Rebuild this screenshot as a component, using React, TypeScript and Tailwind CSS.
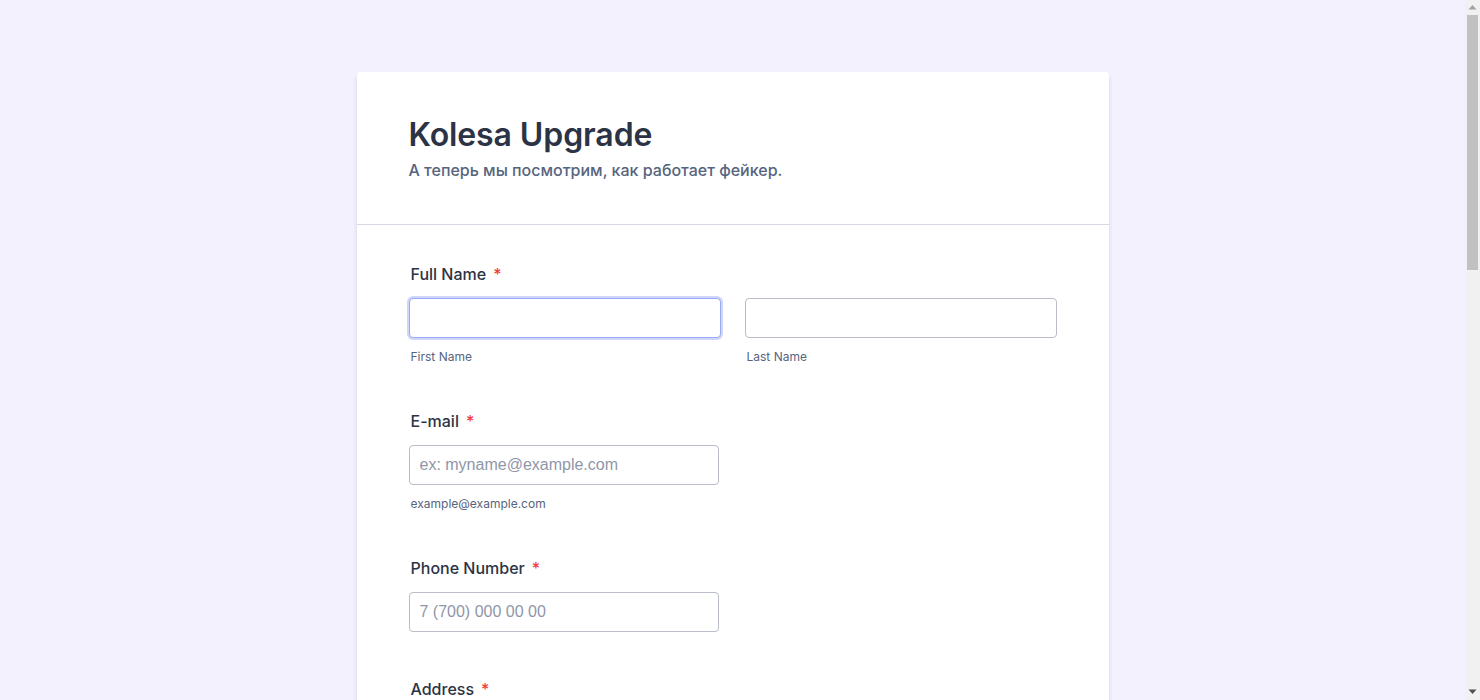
import React from "react";

const inter = { fontFamily: "Inter, 'Noto Sans', sans-serif" };

function Label({ text }: { text: string }) {
  return (
    <div className="pl-[2px] h-6 flex items-center text-[16px] font-medium text-[#2c3345] leading-6" style={inter}>
      <span>{text}</span>
      <span className="ml-[7px] text-[#f23a3c]">*</span>
    </div>
  );
}

function Input({ placeholder, focused, w = "w-[310px]" }: { placeholder?: string; focused?: boolean; w?: string }) {
  return (
    <input
      readOnly
      placeholder={placeholder}
      className={`${w} h-10 rounded-[4px] bg-white px-[10px] text-[16px] outline-none placeholder:text-[#8f96a8] ${
        focused ? "border border-[#9aa8f7] shadow-[0_0_0_2px_#cfd7fc]" : "border border-[#b8bdc9]"
      }`}
      style={{ fontFamily: "'Liberation Sans', Arial, sans-serif" }}
    />
  );
}

function Sub({ text }: { text: string }) {
  return (
    <div className="pl-[2px] mt-[10px] text-[12px] leading-[18px] text-[#57647e]" style={inter}>
      {text}
    </div>
  );
}

function Scrollbar() {
  return (
    <div className="fixed right-0 top-0 h-[700px] w-[15px] bg-[#f1f1f1] flex flex-col items-center">
      <svg width="15" height="15" viewBox="0 0 15 15" className="shrink-0">
        <polygon points="3.5,9.5 7.5,5 11.5,9.5" fill="#a3a3a3" />
      </svg>
      <div className="w-[11px] h-[255px] bg-[#c1c1c1]" />
      <div className="flex-1" />
      <svg width="15" height="15" viewBox="0 0 15 15" className="shrink-0">
        <polygon points="3.5,4.5 11.5,4.5 7.5,9" fill="#505050" />
      </svg>
    </div>
  );
}

export default function App() {
  return (
    <div className="min-h-screen bg-[#f3f1fe] pt-[72px] pb-[120px] pr-[15px]">
      <Scrollbar />
      <div className="mx-auto w-[752px] bg-white rounded-[3px] shadow-[0_4px_4px_rgba(87,100,126,0.21)]">
        <div className="px-[52px] pt-[43px] pb-[42px] border-b border-[#d8d8e4]">
          <h1 className="text-[32px] leading-10 font-semibold text-[#2c3345] tracking-[-0.1px]" style={inter}>
            Kolesa Upgrade
          </h1>
          <p className="mt-[3px] text-[16px] leading-6 font-medium text-[#57647e]" style={inter}>
            А теперь мы посмотрим, как работает фейкер.
          </p>
        </div>
        <div className="px-[52px] pt-[37px] pb-[60px]">
          <div className="mb-[43px]">
            <Label text="Full Name" />
            <div className="mt-3 flex gap-6">
              <div>
                <Input focused w="w-[312px]" />
                <Sub text="First Name" />
              </div>
              <div>
                <Input w="w-[312px]" />
                <Sub text="Last Name" />
              </div>
            </div>
          </div>
          <div className="mb-[43px]">
            <Label text="E-mail" />
            <div className="mt-3">
              <Input placeholder="ex: myname@example.com" />
              <Sub text="example@example.com" />
            </div>
          </div>
          <div className="mb-[45px]">
            <Label text="Phone Number" />
            <div className="mt-3">
              <Input placeholder="7 (700) 000 00 00" />
            </div>
          </div>
          <div className="mb-[45px]">
            <Label text="Address" />
            <div className="mt-3 flex flex-col">
              <Input w="w-[648px]" />
              <Sub text="Street Address" />
              <div className="mt-4">
                <Input w="w-[648px]" />
                <Sub text="Street Address Line 2" />
              </div>
              <div className="mt-4 flex gap-6">
                <div>
                  <Input w="w-[312px]" />
                  <Sub text="City" />
                </div>
                <div>
                  <Input w="w-[312px]" />
                  <Sub text="State / Province" />
                </div>
              </div>
              <div className="mt-4">
                <Input w="w-[312px]" />
                <Sub text="Postal / Zip Code" />
              </div>
            </div>
          </div>
          <div className="mb-[45px]">
            <Label text="Comment" />
            <div className="mt-3">
              <textarea
                readOnly
                className="w-[648px] h-[163px] rounded-[4px] border border-[#b8bdc9] outline-none resize-none"
              />
            </div>
          </div>
          <div className="flex justify-center pt-4">
            <button
              className="h-10 px-8 rounded-[4px] bg-[#18bd5b] text-white text-[16px] font-medium"
              style={inter}
            >
              Submit
            </button>
          </div>
        </div>
      </div>
    </div>
  );
}
